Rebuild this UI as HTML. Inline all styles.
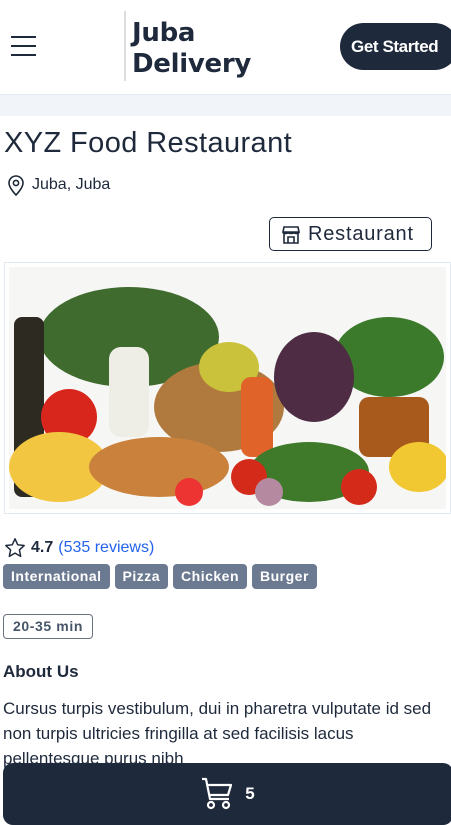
<!DOCTYPE html>
<html><head><meta charset="utf-8"><style>
*{box-sizing:border-box;margin:0;padding:0}
body{width:451px;height:823px;overflow:hidden;background:#fff;font-family:"Liberation Sans","DejaVu Sans",sans-serif;color:#1e293b;position:relative}
.hdr{height:95px;border-bottom:1px solid #e2e8f0;position:relative}
.band{height:21px;background:#f1f5f9}
.logo{position:absolute;left:124px;top:11px;height:70px;border-left:2px solid #ddd;padding-left:6px;font-weight:900;font-family:"DejaVu Sans",sans-serif;font-size:26px;line-height:31px;color:#1e293b;padding-top:7px;letter-spacing:-0.3px}
.btn{position:absolute;left:340px;top:23px;width:118px;height:47px;border-radius:24px;background:#1e293b;color:#fff;font-size:17px;font-weight:bold;line-height:47px;padding-left:11px;letter-spacing:-0.4px}
h1{font-size:29px;font-weight:normal;position:absolute;left:4px;top:127px;letter-spacing:0.4px}
.loc{position:absolute;left:6px;top:174px;font-size:16px;display:flex;align-items:center;gap:6px}
.rest{position:absolute;left:269px;top:217px;width:163px;height:34px;border:1px solid #1e293b;border-radius:5px;font-size:20px;line-height:32px;padding-left:38px;letter-spacing:0.8px}
.img{position:absolute;left:4px;top:262px;width:447px;height:252px;border:1px solid #e2e8f0;padding:4px}
.rate{position:absolute;left:4px;top:537px;font-size:16px;display:flex;align-items:center;gap:5px}
.tags{position:absolute;left:3px;top:564px;display:flex;gap:5px}
.tag{background:#6b7a90;color:#fff;font-weight:bold;font-size:14px;height:25px;line-height:25px;padding:0 8px;border-radius:4px;letter-spacing:0.5px}
.time{position:absolute;left:3px;top:614px;border:1px solid #6b7280;border-radius:4px;font-size:14px;color:#475569;font-weight:bold;padding:0 9px;height:25px;line-height:23px;letter-spacing:0.6px}
.about{position:absolute;left:3px;top:662px;font-size:17px;font-weight:bold}
.p{position:absolute;left:3px;top:696px;font-size:17px;line-height:25px;width:446px}
.cart{position:absolute;left:3px;top:763px;width:450px;height:62px;background:#1e293b;border-radius:10px;display:flex;justify-content:center;align-items:center;gap:12px;color:#fff;font-weight:bold;font-size:17px}
</style></head><body>
<div class="hdr">
<svg style="position:absolute;left:11px;top:35px" width="26" height="22"><path d="M0 2H25M0 11H25M0 20H25" stroke="#1e293b" stroke-width="2"/></svg>
<div class="logo">Juba<br>Delivery</div>
<div class="btn">Get Started</div>
</div>
<div class="band"></div>
<h1>XYZ Food Restaurant</h1>
<div class="loc"><svg width="20" height="22" viewBox="0 0 20 22"><path d="M10 21s-7-7-7-12a7 7 0 0 1 14 0c0 5-7 12-7 12z" fill="none" stroke="#1e293b" stroke-width="1.6"/><circle cx="10" cy="9" r="2.6" fill="none" stroke="#1e293b" stroke-width="1.6"/></svg>Juba, Juba</div>
<div class="rest"><svg style="position:absolute;left:12px;top:8px" width="18" height="18" viewBox="0 0 18 18"><path d="M2 1h14l1 5H1zM1 6c0 2 5 2 5 0c0 2 6 2 6 0c0 2 5 2 5 0M2 8v9h14V8M6 17v-6h6v6" fill="none" stroke="#1e293b" stroke-width="1.6"/></svg>Restaurant</div>
<div class="img"><svg width="437" height="242" viewBox="0 0 437 242">
<rect width="437" height="242" fill="#f6f6f4"/>
<ellipse cx="120" cy="70" rx="90" ry="50" fill="#3f6b2e"/>
<ellipse cx="380" cy="90" rx="55" ry="40" fill="#3b7a2a"/>
<rect x="5" y="50" width="30" height="180" rx="8" fill="#2d2a22"/>
<rect x="100" y="80" width="40" height="90" rx="12" fill="#eeeee6"/>
<ellipse cx="210" cy="140" rx="65" ry="45" fill="#b07a3e"/>
<ellipse cx="305" cy="110" rx="40" ry="45" fill="#4d2c44"/>
<ellipse cx="220" cy="100" rx="30" ry="25" fill="#c9c23a"/>
<rect x="350" y="130" width="70" height="60" rx="10" fill="#a85a1c"/>
<rect x="232" y="110" width="32" height="80" rx="10" fill="#e0642a"/>
<ellipse cx="60" cy="150" rx="28" ry="28" fill="#d9261c"/>
<ellipse cx="50" cy="200" rx="50" ry="35" fill="#f2c640"/>
<ellipse cx="150" cy="200" rx="70" ry="30" fill="#c9813c"/>
<ellipse cx="300" cy="205" rx="60" ry="30" fill="#3e7a2a"/>
<ellipse cx="410" cy="200" rx="30" ry="25" fill="#f2c832"/>
<circle cx="240" cy="210" r="18" fill="#d42a1a"/><circle cx="350" cy="220" r="18" fill="#d42a1a"/>
<circle cx="180" cy="225" r="14" fill="#e33"/><circle cx="260" cy="225" r="14" fill="#b58aa0"/>
</svg></div>
<div class="rate"><svg width="22" height="22" viewBox="0 0 24 24"><path d="M12 2l3 6.5 7 .8-5.2 4.8 1.4 7L12 17.6 5.8 21.1l1.4-7L2 9.3l7-.8z" fill="none" stroke="#1e293b" stroke-width="1.6" stroke-linejoin="round"/></svg><b>4.7</b><span style="color:#2563eb">(535 reviews)</span></div>
<div class="tags"><span class="tag">International</span><span class="tag">Pizza</span><span class="tag">Chicken</span><span class="tag">Burger</span></div>
<div class="time">20-35 min</div>
<div class="about">About Us</div>
<div class="p">Cursus turpis vestibulum, dui in pharetra vulputate id sed non turpis ultricies fringilla at sed facilisis lacus pellentesque purus nibh</div>
<div class="cart"><svg width="32" height="34" viewBox="0 0 32 34"><path d="M1 2h4l4 20h19M7 8h23l-3 10H9" fill="none" stroke="#fff" stroke-width="2.2" stroke-linejoin="round"/><circle cx="10" cy="28" r="3" fill="none" stroke="#fff" stroke-width="2.2"/><circle cx="25" cy="28" r="3" fill="none" stroke="#fff" stroke-width="2.2"/></svg>5</div>
</body></html>
